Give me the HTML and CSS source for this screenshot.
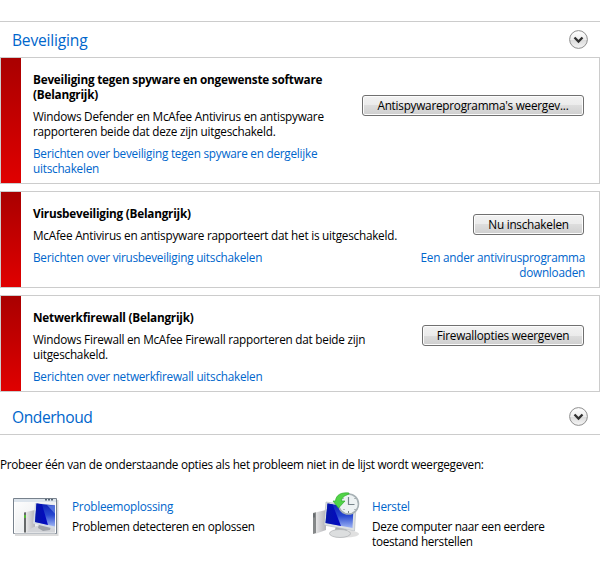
FILE: index.html
```html
<!DOCTYPE html>
<html lang="nl">
<head>
<meta charset="utf-8">
<title>Onderhoudscentrum</title>
<link rel="stylesheet" href="styles.css">
</head>
<body>
<main class="page">
  <header class="section-head first">
    <h2>Beveiliging</h2>
    <svg class="chevron" width="19" height="19" viewBox="0 0 19 19"><defs><linearGradient id="ch" x2="0" y2="1"><stop offset="0" stop-color="#fff"/><stop offset=".5" stop-color="#ededed"/><stop offset=".55" stop-color="#dcdcdc"/><stop offset="1" stop-color="#f6f6f6"/></linearGradient></defs><circle cx="9.5" cy="9.5" r="8.9" fill="url(#ch)" stroke="#8e8e8e"/><path d="m5.5 7.5 4 4 4-4" fill="none" stroke="#303030" stroke-width="2.3"/></svg>
  </header>
  <section class="card spyware">
    <div class="stripe"></div>
    <div class="info">
      <h3>Beveiliging tegen spyware en ongewenste software<br>(Belangrijk)</h3>
      <p>Windows Defender en McAfee Antivirus en antispyware<br>rapporteren beide dat deze zijn uitgeschakeld.</p>
      <a>Berichten over beveiliging tegen spyware en dergelijke<br>uitschakelen</a>
    </div>
    <div class="action"><button class="wide">Antispywareprogramma's weergev...</button></div>
  </section>
  <section class="card virus">
    <div class="stripe"></div>
    <div class="info">
      <h3>Virusbeveiliging (Belangrijk)</h3>
      <p>McAfee Antivirus en antispyware rapporteert dat het is uitgeschakeld.</p>
      <a>Berichten over virusbeveiliging uitschakelen</a>
    </div>
    <div class="action"><button class="short">Nu inschakelen</button><a>Een ander antivirusprogramma<br>downloaden</a></div>
  </section>
  <section class="card firewall">
    <div class="stripe"></div>
    <div class="info">
      <h3>Netwerkfirewall (Belangrijk)</h3>
      <p>Windows Firewall en McAfee Firewall rapporteren dat beide zijn<br>uitgeschakeld.</p>
      <a>Berichten over netwerkfirewall uitschakelen</a>
    </div>
    <div class="action"><button class="medium">Firewallopties weergeven</button></div>
  </section>
  <header class="section-head last">
    <h2>Onderhoud</h2>
    <svg class="chevron" width="19" height="19" viewBox="0 0 19 19"><circle cx="9.5" cy="9.5" r="8.9" fill="url(#ch)" stroke="#8e8e8e"/><path d="m5.5 7.5 4 4 4-4" fill="none" stroke="#303030" stroke-width="2.3"/></svg>
  </header>
  <p class="hint">Probeer één van de onderstaande opties als het probleem niet in de lijst wordt weergegeven:</p>
  <div class="options">
    <div class="option">
      <svg width="48" height="48" viewBox="0 0 48 48">
        <defs>
          <linearGradient id="metal"><stop offset="0" stop-color="#f2f2f2"/><stop offset="1" stop-color="#b4b4b8"/></linearGradient>
          <linearGradient id="pane" x2="1" y2="1"><stop offset="0" stop-color="#fff"/><stop offset="1" stop-color="#e0e3e6"/></linearGradient>
          <linearGradient id="glow" x2="0" y2="1"><stop offset="0" stop-color="#0c20b8"/><stop offset=".5" stop-color="#2848d0"/><stop offset="1" stop-color="#9db4f4"/></linearGradient>
          <linearGradient id="deep" x2="1"><stop offset="0" stop-color="#0616a8"/><stop offset="1" stop-color="#0208c4"/></linearGradient>
        </defs>
        <path d="M3 9h43.500v36H3z" fill="#dcdcdc"/>
        <path d="M1.500 7.500h43v35h-43z" fill="url(#pane)" stroke="#77818c"/>
        <path d="M2 8h42v3H2z" fill="#dce4ec"/><path d="M2.500 11.500v30.500h41v-30.500" fill="none" stroke="#fff"/>
        <path d="M33 8.700h2m1 0h2m1 0h2" stroke="#566575" stroke-width="1.400"/>
        <path d="m12 21.500 11-2.500v20l-9 3h-2z" fill="url(#metal)"/><path d="m12 21.500 2-.3V41.500h-2z" fill="#66696a"/><path d="M13 24v3" stroke="#4fdc24" stroke-width="1.400"/>
        <path d="M15 41.500c3-4 8-7 14-7l14 3v4z" fill="#d2d4d8"/><path d="m27 33 12 2-1 4-7 1-5-3z" fill="#9da1a8"/>
        <path d="m23 12 20 2v24l-22-5.500z" fill="#d3dae4"/><path d="m24.500 12.500 18.500 2V35.500l-20-4.500z" fill="url(#glow)"/><path d="m24.500 12.500 5.500.8L36 34l-13-3z" fill="url(#deep)"/><path d="m35 14 8 .8v8z" fill="#6788e4" opacity=".75"/>
      </svg>
      <div><a>Probleemoplossing</a><p>Problemen detecteren en oplossen</p></div>
    </div>
    <div class="option">
      <svg width="48" height="48" viewBox="0 0 48 48">
        <ellipse cx="34" cy="43" rx="13" ry="3.500" fill="#000" opacity=".12"/>
        <path d="m1 22 13-3v20L3 43H1z" fill="url(#metal)"/><path d="m1 22 3-.7V42l-3 1z" fill="#858889"/><path d="M2 22.500v4" stroke="#4d5358"/>
        <path d="m24 35 10 2 2 5H22z" fill="#a9adb0"/><ellipse cx="28" cy="42.500" rx="10.500" ry="4" fill="#dcdedf" stroke="#b2b5b8" stroke-width=".8"/>
        <path d="m14 11 30 4-1.500 25L12 34z" fill="#dce0e3" stroke="#b0b5ba" stroke-width=".6"/><path d="m15.500 12.500 26 4L40.500 37l-27-5z" fill="url(#glow)"/><path d="m15.500 12.500 5 .8L29 35l-15.500-3z" fill="url(#deep)"/>
        <circle cx="36.500" cy="13" r="10" fill="#edf2f3" stroke="#a7b1b5" stroke-width="1.600"/><path d="M36.500 6v7.500h6" fill="none" stroke="#76838a" stroke-width="1.200"/><path d="M36.500 20v2m-8-9h1m1-6 1 1m0 11 1-1m10-10 1-1m0 12-1-1" stroke="#7b8589"/>
        <path d="M37 2C29 1 24 4 23.500 10H21l5.500 7 6.500-7h-3.500c0-3 2-5 7.500-7z" fill="#51d447" stroke="#32ae31" stroke-width=".7"/>
      </svg>
      <div><a>Herstel</a><p>Deze computer naar een eerdere<br>toestand herstellen</p></div>
    </div>
  </div>
</main>
</body>
</html>
```

FILE: styles.css
```css
* { box-sizing: border-box; }
body { margin: 0; background: #fff; color: #000; font: 11.75px/15px "Open Sans", "Noto Sans", sans-serif; letter-spacing: -.24px; }
h2, h3, p { margin: 0; }
a { color: #0066cc; display: block; }
.page { width: 600px; padding-top: 21px; white-space: nowrap; }
.section-head { display: flex; justify-content: space-between; align-items: center; padding: 0 12px 0 12px; }
.first { height: 36px; border-top: 1px solid #ccc; }
.last { height: 43px; border-bottom: 1px solid #ccc; }
.section-head h2 { font-size: 15.6px; line-height: 22px; font-weight: 400; color: #0066cc; letter-spacing: -.2px; padding-top: 1px; }
.section-head.last h2 { padding-top: 8px; letter-spacing: -.45px; }
.last .chevron { margin-top: 7px; }
.card { display: flex; border: 1px solid #ccc; height: 97px; margin-bottom: 7px; }
.spyware { height: 127px; }
.firewall { margin-bottom: 0; }
.stripe { width: 20px; background: linear-gradient(#a90000, #e00000); }
.info { display: flex; flex-direction: column; gap: 7px; padding: 14px 0 0 12px; }
h3 { font-size: 11.75px; line-height: 15px; font-weight: 700; letter-spacing: -.22px; }
.action { margin-left: auto; padding: 22px 14px 0 0; display: flex; flex-direction: column; align-items: flex-end; gap: 15px; text-align: right; }
.spyware .action { padding-top: 37px; }
.firewall .action { padding-top: 29px; }
.action button { margin-right: 1px; }
button { height: 21px; padding: 0; border: 1px solid #707070; border-radius: 3px; box-shadow: inset 0 0 0 1px #fcfcfc; background: linear-gradient(#f2f2f2, #ebebeb 50%, #ddd 50%, #cfcfcf); font: inherit; letter-spacing: inherit; color: #000; }
.wide { width: 222px; }
.short { width: 111px; }
.medium { width: 162px; }
.hint { margin-top: 22px; letter-spacing: -.28px; }
.options { display: grid; grid-template-columns: 300px 300px; margin-top: 19px; padding-left: 12px; }
.option { display: flex; gap: 12px; }
.option div { padding-top: 8px; }
.option a { margin-bottom: 5px; }
.option p { letter-spacing: -.3px; }
```
